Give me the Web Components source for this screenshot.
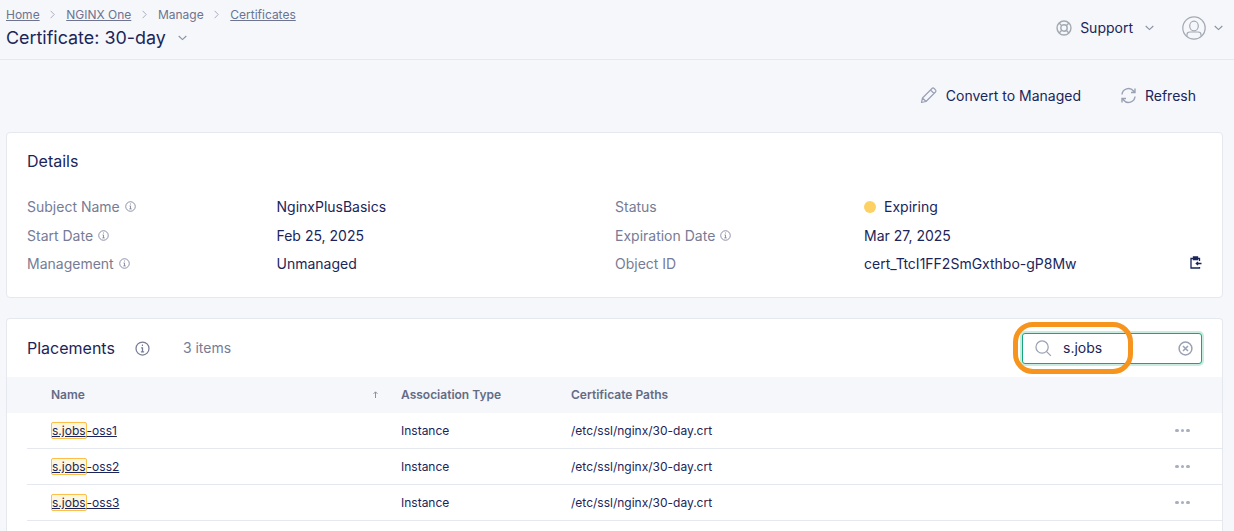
<!DOCTYPE html>
<html>
<head>
<meta charset="utf-8">
<title>Certificate: 30-day</title>
<style>
    html, body { margin: 0; height: 531px; overflow: hidden; }
    body { background: #f5f7fa; font-family: Inter, "Liberation Sans", sans-serif; color: #1b2559; }
</style>
</head>
<body>
<page-header></page-header>
<action-bar></action-bar>
<details-card></details-card>
<placements-card></placements-card>

<script>
const infoIcon = (size, weight = 0.9) => `<svg width="${size}" height="${size}" viewBox="0 0 12 12" fill="none" stroke="#767c96" stroke-width="${weight}"><circle cx="6" cy="6" r="5.2"/><path d="M4.9 5.4H6V8.6M4.7 8.6H7.3"/><path d="M5.5 3.4H6.4" stroke-width="1.1"/></svg>`;

const chevron = `<svg width="9" height="6" viewBox="0 0 9 6" fill="none" stroke="#8a90a6" stroke-width="1.1"><path d="M.7 1l3.8 3.6L8.3 1"/></svg>`;

const crumbSep = `<svg class="sep" width="5" height="9" viewBox="0 0 5 9" fill="none" stroke="#a9aec0" stroke-width="1"><path d="M.6.8l3.6 3.7L.6 8.2"/></svg>`;

class PageHeader extends HTMLElement {
    constructor() {
        super();
        this.attachShadow({ mode: 'open' });
        this.shadowRoot.innerHTML = `
            <style>
                :host { display: flex; justify-content: space-between; height: 59px; border-bottom: 1px solid #e6e8ef; padding: 0 11px 0 6px; }
                .crumbs { display: flex; align-items: center; font-size: 12px; line-height: 15px; margin-top: 7px; color: #6d7391; }
                .crumbs a { color: #6d7391; text-decoration: underline; }
                .sep { margin: 0 10.8px; }
                .title { display: flex; align-items: center; font-size: 17.9px; line-height: 24px; margin-top: 4px; color: #1b2559; }
                .title svg { margin-left: 12px; }
                .right { display: flex; align-items: center; height: 55px; font-size: 14px; }
                .support { display: flex; align-items: center; }
                .support span { margin: 0 12px 0 8px; }
                .user { display: flex; align-items: center; margin-left: 28px; }
                .user svg:last-child { margin-left: 8px; }
            </style>
            <div>
                <div class="crumbs"><a>Home</a>${crumbSep}<a>NGINX One</a>${crumbSep}Manage${crumbSep}<a>Certificates</a></div>
                <div class="title">Certificate: 30-day${chevron}</div>
            </div>
            <div class="right">
                <div class="support">
                    <svg width="16" height="16" viewBox="0 0 17 17" fill="none" stroke="#a3a9b3" stroke-width="1.5"><circle cx="8.5" cy="8.5" r="7.4"/><circle cx="8.5" cy="8.5" r="3.4"/><path d="M3.3 3.3l2.8 2.8M13.7 3.3l-2.8 2.8M3.3 13.7l2.8-2.8M13.7 13.7l-2.8-2.8"/></svg>
                    <span>Support</span>${chevron}
                </div>
                <div class="user">
                    <svg width="24" height="24" viewBox="0 0 24 24" fill="none" stroke="#a3a9b3" stroke-width="1.2"><circle cx="12" cy="12" r="11.2"/><ellipse cx="12" cy="10" rx="4.3" ry="4.8"/><path d="M5 20v-1.5c0-1.5 1.4-2.5 3-2.5h8c1.6 0 3 1 3 2.5V20"/></svg>
                    ${chevron}
                </div>
            </div>
        `;
    }
}

class ActionBar extends HTMLElement {
    constructor() {
        super();
        this.attachShadow({ mode: 'open' });
        this.shadowRoot.innerHTML = `
            <style>
                :host { display: flex; justify-content: flex-end; align-items: center; height: 70px; padding: 0 38px 2px 0; font-size: 14px; color: #1b2559; }
                .btn { display: flex; align-items: center; gap: 8px; }
                .btn + .btn { margin-left: 39px; }
            </style>
            <div class="btn">
                <svg width="18" height="18" viewBox="0 0 18 18" fill="none" stroke="#9aa1b4" stroke-width="1.2" stroke-linejoin="round"><path d="M1.5 16.5l1-4.5L12 2.5a1.5 1.5 0 0 1 2.1 0l1.4 1.4a1.5 1.5 0 0 1 0 2.1L6 15.5zM2.5 12L6 15.5M10.5 4L14 7.5"/></svg>
                Convert to Managed
            </div>
            <div class="btn">
                <svg width="17" height="17" viewBox="0 0 17 17" fill="none" stroke="#9aa1b4" stroke-width="1.4"><path d="M2 7.5A6.5 6.5 0 0 1 13.5 4l1.5 1.5M15 1.5v4h-4"/><path d="M15 9.5A6.5 6.5 0 0 1 3.5 13L2 11.5M2 15.5v-4h4"/></svg>
                Refresh
            </div>
        `;
    }
}

class DetailField extends HTMLElement {
    constructor() {
        super();
        this.attachShadow({ mode: 'open' });
    }

    connectedCallback() {
        const label = this.getAttribute('label');
        const icon = this.hasAttribute('info') ? infoIcon(11) : '';
        this.shadowRoot.innerHTML = `
            <style>
                :host { display: grid; grid-template-columns: var(--label-width) 1fr; align-items: center; height: 28.5px; font-size: 14px; }
                .label { display: flex; align-items: center; gap: 5px; color: #767c96; }
                .value { display: flex; align-items: center; color: #1b2559; }
            </style>
            <div class="label">${label}${icon}</div>
            <div class="value"><slot></slot></div>
        `;
    }
}

class DetailsCard extends HTMLElement {
    constructor() {
        super();
        this.attachShadow({ mode: 'open' });
        this.shadowRoot.innerHTML = `
            <style>
                :host { display: block; box-sizing: border-box; height: 166px; margin: 0 11px 0 6px; background: #fff; border: 1px solid #e6e8ef; border-radius: 4px; padding: 17px 20px 0; }
                h2 { margin: 0 0 20.3px; font-size: 16px; line-height: 22px; font-weight: 400; color: #1b2559; }
                .cols { display: grid; grid-template-columns: 588px 1fr; }
                .left { --label-width: 249.5px; }
                .right { --label-width: 249px; }
                .dot { width: 12px; height: 12px; border-radius: 50%; background: #fdd163; margin-right: 8px; }
                .copy { margin-left: auto; display: flex; margin-top: -2px; }
            </style>
            <h2>Details</h2>
            <div class="cols">
                <div class="left">
                    <detail-field label="Subject Name" info>NginxPlusBasics</detail-field>
                    <detail-field label="Start Date" info>Feb 25, 2025</detail-field>
                    <detail-field label="Management" info>Unmanaged</detail-field>
                </div>
                <div class="right">
                    <detail-field label="Status"><span class="dot"></span>Expiring</detail-field>
                    <detail-field label="Expiration Date" info>Mar 27, 2025</detail-field>
                    <detail-field label="Object ID">cert_TtcI1FF2SmGxthbo-gP8Mw<span class="copy"><svg width="12" height="13" viewBox="0 0 12 13" fill="none" stroke="#1b2559" stroke-width="1.3"><path d="M9.5 5V2.5h-8.5v9.5h8.5V11"/><path d="M3.5 1h4v2.5h-4z" fill="#1b2559"/><path d="M11.5 7.5H6.5M8 6L6.3 7.5 8 9"/></svg></span></detail-field>
                </div>
            </div>
        `;
    }
}

class SearchBox extends HTMLElement {
    constructor() {
        super();
        this.attachShadow({ mode: 'open' });
        this.shadowRoot.innerHTML = `
            <style>
                :host { display: flex; align-items: center; box-sizing: border-box; width: 180px; height: 31px; border: 1px solid #17a57e; border-radius: 3px; box-shadow: 0 0 0 2px #c9ece1; padding: 0 8px 0 12px; font-size: 14px; color: #1b2559; background: #fff; }
                .q { margin-left: 11px; flex: 1; padding-bottom: 2px; }
            </style>
            <svg width="17" height="17" viewBox="0 0 18 18" fill="none" stroke="#9aa1b4" stroke-width="1.3"><circle cx="7.5" cy="7.5" r="6.5"/><path d="M12.3 12.3l4.5 4.5"/></svg>
            <span class="q">s.jobs</span>
            <svg width="15" height="15" viewBox="0 0 15 15" fill="none" stroke="#9aa1b4" stroke-width="1.5"><circle cx="7.5" cy="7.5" r="6.4"/><path d="M5 5l5 5M10 5l-5 5"/></svg>
        `;
    }
}

class PlacementRow extends HTMLElement {
    constructor() {
        super();
        this.attachShadow({ mode: 'open' });
    }

    connectedCallback() {
        const name = this.getAttribute('name');
        this.shadowRoot.innerHTML = `
            <style>
                :host { display: grid; grid-template-columns: 350px 170px 1fr 47px; align-items: center; box-sizing: border-box; height: 36px; margin-left: 20px; padding-left: 24px; border-bottom: 1px solid #e6e8ef; font-size: 12px; color: #1b2559; }
                a { text-decoration: underline; color: #1b2559; }
                mark { background: #fff6e0; color: inherit; border: 1px solid #fdbe4a; border-radius: 2px; padding: 0; }
                .more { display: flex; gap: 2px; }
                .more i { width: 3.5px; height: 3.5px; border-radius: 50%; background: #a9aec0; }
            </style>
            <div><a><mark>s.jobs</mark>-${name}</a></div>
            <div>Instance</div>
            <div>/etc/ssl/nginx/30-day.crt</div>
            <div class="more"><i></i><i></i><i></i></div>
        `;
    }
}

class PlacementsCard extends HTMLElement {
    constructor() {
        super();
        this.attachShadow({ mode: 'open' });
        this.shadowRoot.innerHTML = `
            <style>
                :host { display: block; box-sizing: border-box; height: 213px; margin: 20px 11px 0 6px; background: #fff; border: 1px solid #e6e8ef; border-bottom: 0; border-radius: 4px 4px 0 0; position: relative; }
                .top { display: flex; align-items: center; height: 58px; padding: 0 20px; }
                h2 { margin: 0; font-size: 16px; font-weight: 400; color: #1b2559; }
                .info { display: flex; margin-left: 20px; }
                .count { margin-left: 33px; padding-bottom: 2px; font-size: 14px; color: #767c96; }
                search-box { margin-left: auto; }
                .head { display: grid; grid-template-columns: 350px 170px 1fr; align-items: center; height: 36px; padding: 0 0 1px 44px; box-sizing: border-box; background: #f5f7fa; font-size: 12px; font-weight: 600; color: #646b85; }
                .name { display: flex; justify-content: space-between; align-items: center; padding-right: 23px; }
                .ring { position: absolute; left: 1006px; top: 3px; width: 120px; height: 52px; box-sizing: border-box; border: 5px solid #f7941d; border-radius: 20px; }
            </style>
            <div class="top">
                <h2>Placements</h2>
                <span class="info">${infoIcon(15, 1)}</span>
                <span class="count">3 items</span>
                <search-box></search-box>
            </div>
            <div class="head">
                <div class="name">Name<svg width="5" height="7" viewBox="0 0 5 7" fill="none" stroke="#8a90a6" stroke-width="1"><path d="M2.5 7V1M.6 2.8l1.9-2 1.9 2"/></svg></div>
                <div>Association Type</div>
                <div>Certificate Paths</div>
            </div>
            <placement-row name="oss1"></placement-row>
            <placement-row name="oss2"></placement-row>
            <placement-row name="oss3"></placement-row>
            <div class="ring"></div>
        `;
    }
}

customElements.define('page-header', PageHeader);
customElements.define('action-bar', ActionBar);
customElements.define('detail-field', DetailField);
customElements.define('details-card', DetailsCard);
customElements.define('search-box', SearchBox);
customElements.define('placement-row', PlacementRow);
customElements.define('placements-card', PlacementsCard);
</script>
</body>
</html>
